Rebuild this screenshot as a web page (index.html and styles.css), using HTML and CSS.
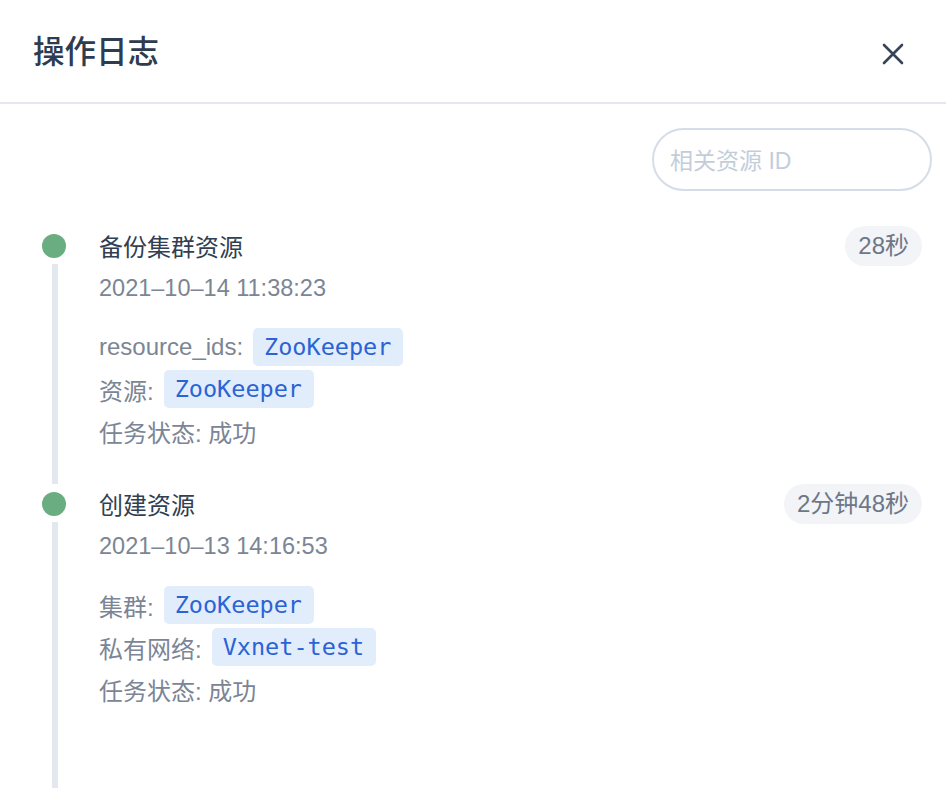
FILE: index.html
```html
<!DOCTYPE html>
<html lang="zh-CN">
<head>
<meta charset="utf-8">
<title>操作日志</title>
<link rel="stylesheet" href="styles.css">
</head>
<body>
<div class="drawer">
  <header class="header">
    <h1 class="title">操作日志</h1>
    <button class="close" aria-label="关闭">
      <svg width="22" height="22" viewBox="0 0 22 22"><path d="M2 2 L20 20 M20 2 L2 20" stroke="#36445a" stroke-width="2.6" stroke-linecap="round" fill="none"/></svg>
    </button>
  </header>
  <div class="toolbar">
    <input class="search" type="text" placeholder="相关资源 ID">
  </div>
  <ul class="timeline">
    <li class="item">
      <div class="rail"><span class="dot"></span><span class="line"></span></div>
      <div class="content">
        <div class="head">
          <span class="name">备份集群资源</span>
          <span class="badge">28秒</span>
        </div>
        <div class="date">2021–10–14 11:38:23</div>
        <div class="fields">
          <div class="field"><span class="label">resource_ids:</span><span class="tag">ZooKeeper</span></div>
          <div class="field"><span class="label">资源:</span><span class="tag">ZooKeeper</span></div>
          <div class="field"><span class="label">任务状态: 成功</span></div>
        </div>
      </div>
    </li>
    <li class="item">
      <div class="rail"><span class="dot"></span><span class="line"></span></div>
      <div class="content">
        <div class="head">
          <span class="name">创建资源</span>
          <span class="badge">2分钟48秒</span>
        </div>
        <div class="date">2021–10–13 14:16:53</div>
        <div class="fields">
          <div class="field"><span class="label">集群:</span><span class="tag">ZooKeeper</span></div>
          <div class="field"><span class="label">私有网络:</span><span class="tag">Vxnet-test</span></div>
          <div class="field"><span class="label">任务状态: 成功</span></div>
        </div>
      </div>
    </li>
  </ul>
</div>
</body>
</html>
```

FILE: styles.css
```css
* { box-sizing: border-box; }
html, body { margin: 0; padding: 0; background: #fff; }
body {
  font-family: "Liberation Sans", "Noto Sans CJK SC", sans-serif;
  color: #333f52;
}
.header {
  height: 104px;
  border-bottom: 2px solid #e4e8ee;
  display: flex;
  align-items: flex-start;
  justify-content: space-between;
  padding: 0 42px 0 33px;
}
.title {
  margin: 29px 0 0;
  font-family: "Noto Sans CJK SC", sans-serif;
  font-size: 31.5px;
  font-weight: 500;
  color: #2f3b4e;
  line-height: 40px;
}
.close {
  margin-top: 43px;
  border: 0;
  background: none;
  padding: 0;
  width: 22px;
  height: 22px;
  display: flex;
  cursor: pointer;
}
.toolbar {
  display: flex;
  justify-content: flex-end;
  padding: 24px 14px 0 0;
}
.search {
  width: 280px;
  height: 63px;
  border: 2px solid #d6dde8;
  border-radius: 32px;
  padding: 3px 16px 0;
  font-family: "Liberation Sans", "Noto Sans CJK SC", sans-serif;
  font-size: 23px;
  outline: none;
}
.search::placeholder { color: #c3cdda; }
.timeline {
  list-style: none;
  margin: 35px 0 0;
  padding: 0 24px 0 42px;
}
.item {
  display: flex;
  gap: 33px;
  padding-bottom: 34px;
}
.item:last-child { padding-bottom: 80px; }
.rail {
  width: 24px;
  flex: none;
  display: flex;
  flex-direction: column;
  align-items: center;
  padding-top: 8px;
  margin-bottom: -34px;
}
.item:last-child .rail { margin-bottom: -80px; }
.dot {
  width: 24px;
  height: 24px;
  border-radius: 50%;
  background: #6aad80;
  flex: none;
}
.line {
  width: 6px;
  flex: 1;
  margin: 6px 0 0 2px;
  background: #e3e8ef;
}
.content { flex: 1; min-width: 0; }
.head {
  display: flex;
  justify-content: space-between;
  align-items: flex-start;
}
.name {
  margin-top: 4px;
  font-size: 24px;
  line-height: 36px;
  color: #323e51;
}
.badge {
  height: 40px;
  line-height: 40px;
  padding: 0 13px;
  border-radius: 20px;
  background: #f2f4f7;
  color: #6d7787;
  font-size: 24px;
}
.date {
  margin-top: 4px;
  font-size: 23.5px;
  line-height: 36px;
  color: #7b8595;
}
.fields {
  margin-top: 22px;
  display: flex;
  flex-direction: column;
  gap: 4px;
}
.field {
  display: flex;
  align-items: center;
  gap: 10px;
  height: 38px;
}
.label {
  font-size: 24px;
  color: #7b8595;
}
.tag {
  height: 38px;
  line-height: 38px;
  padding: 0 12px 0 11px;
  border-radius: 5px;
  background: #e2edfc;
  color: #2b63d5;
  font-family: "DejaVu Sans Mono", monospace;
  font-size: 23.5px;
}
```
